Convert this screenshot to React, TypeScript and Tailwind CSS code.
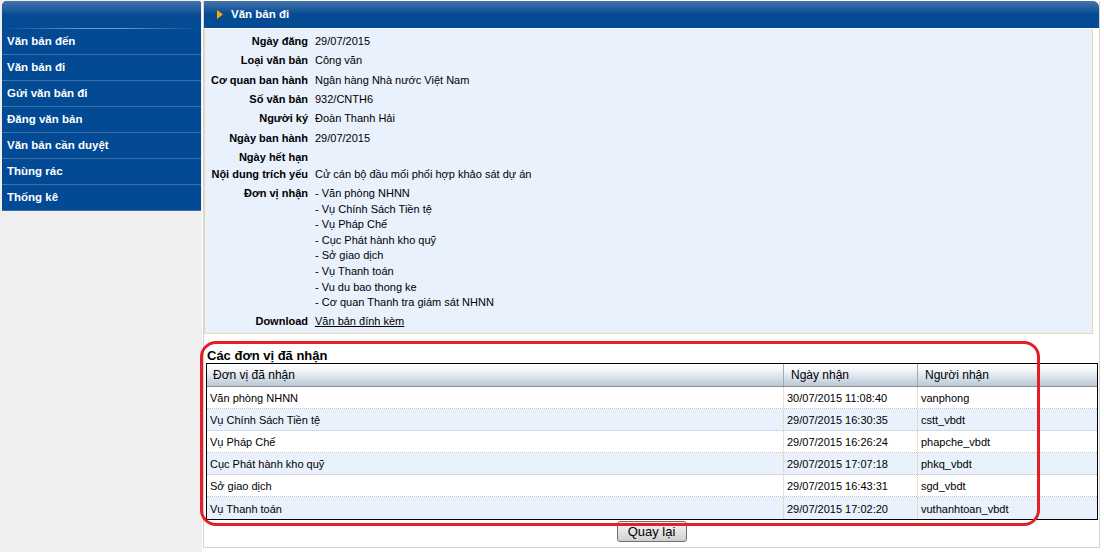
const menu = [
  'Văn bản đến',
  'Văn bản đi',
  'Gửi văn bản đi',
  'Đăng văn bản',
  'Văn bản cần duyệt',
  'Thùng rác',
  'Thống kê',
];

const fields = [
  { label: 'Ngày đăng', value: '29/07/2015', h: 'h-[20px]' },
  { label: 'Loại văn bản', value: 'Công văn', h: 'h-[19px]' },
  { label: 'Cơ quan ban hành', value: 'Ngân hàng Nhà nước Việt Nam', h: 'h-[20px]' },
  { label: 'Số văn bản', value: '932/CNTH6', h: 'h-[19px]' },
  { label: 'Người ký', value: 'Đoàn Thanh Hải', h: 'h-[19px]' },
  { label: 'Ngày ban hành', value: '29/07/2015', h: 'h-[20px]' },
  { label: 'Ngày hết hạn', value: '', h: 'h-[18px]' },
  { label: 'Nội dung trích yếu', value: 'Cử cán bộ đầu mối phối hợp khảo sát dự án', h: 'h-[17px]' },
];

const units = [
  'Văn phòng NHNN',
  'Vụ Chính Sách Tiền tệ',
  'Vụ Pháp Chế',
  'Cục Phát hành kho quỹ',
  'Sở giao dịch',
  'Vụ Thanh toán',
  'Vu du bao thong ke',
  'Cơ quan Thanh tra giám sát NHNN',
];

const received = [
  ['Văn phòng NHNN', '30/07/2015 11:08:40', 'vanphong'],
  ['Vụ Chính Sách Tiền tệ', '29/07/2015 16:30:35', 'cstt_vbdt'],
  ['Vụ Pháp Chế', '29/07/2015 16:26:24', 'phapche_vbdt'],
  ['Cục Phát hành kho quỹ', '29/07/2015 17:07:18', 'phkq_vbdt'],
  ['Sở giao dịch', '29/07/2015 16:43:31', 'sgd_vbdt'],
  ['Vụ Thanh toán', '29/07/2015 17:02:20', 'vuthanhtoan_vbdt'],
];

export default function App() {
  return (
    <div className="relative flex h-[552px] w-[1104px] overflow-hidden bg-white font-['Liberation_Sans',Arial,sans-serif] text-[11px] text-black">
      {/* left menu */}
      <aside className="w-[202px] shrink-0 bg-[#efefef] pl-[2px] pt-[1px]">
        <div className="w-[199px] rounded-tl-[5px] rounded-tr-[3px] bg-[#024a93]">
          <div className="h-[27px] rounded-tl-[5px] rounded-tr-[3px] bg-[linear-gradient(to_bottom,#4572ac,#044b93_55%)]" />
          <div className="h-[1px] bg-[linear-gradient(to_right,#024a93,#6f98c8_40%,#6f98c8_60%,#024a93)]" />
          {menu.map((m) => (
            <div
              key={m}
              className="flex h-[26px] items-center border-b border-[#3a6fab] pl-[5px] pt-[1px] text-[11.5px] font-bold text-white"
            >
              {m}
            </div>
          ))}
        </div>
      </aside>

      {/* main panel */}
      <main className="ml-[1px] mt-[1px] flex h-[547px] w-[897px] flex-col border-x border-b border-[#d2d2d2]">
        <div className="flex h-[27px] items-center rounded-tr-[6px] bg-[linear-gradient(to_bottom,#4572ac,#044b93_50%)] pl-[13px]">
          <svg width="6" height="9" viewBox="0 0 6 9" className="mr-[8px]">
            <polygon points="0,0 6,4.5 0,9" fill="#f6ab00" />
          </svg>
          <span className="text-[11.5px] font-bold text-white">Văn bản đi</span>
        </div>

        <section className="mt-[1px] w-[889px] border-x border-b border-[#e4dcae] bg-[#e8f1fc] pb-[1px] pt-[2px]">
          {fields.map((f) => (
            <div key={f.label} className={`flex items-center ${f.h}`}>
              <div className="flex w-[103px] justify-end whitespace-nowrap font-bold">{f.label}</div>
              <div className="pl-[7px]">{f.value}</div>
            </div>
          ))}
          <div className="flex pt-[3px]">
            <div className="flex w-[103px] justify-end whitespace-nowrap font-bold leading-[15.6px]">Đơn vị nhận</div>
            <div className="pl-[7px] leading-[15.6px]">
              {units.map((u) => (
                <div key={u}>- {u}</div>
              ))}
            </div>
          </div>
          <div className="flex h-[21px] items-center">
            <div className="flex w-[103px] justify-end font-bold">Download</div>
            <div className="pl-[7px]">
              <a href="#" className="text-black underline">Văn bản đính kèm</a>
            </div>
          </div>
        </section>

        <div className="ml-[3px] mt-[15px] h-[14px] text-[13px] font-bold leading-[14px]">Các đơn vị đã nhận</div>

        <div className="ml-[2px] w-[892px] border border-black">
          <div className="grid h-[23px] grid-cols-[577px_134px_1fr] border-b border-[#8c8c8c] bg-[linear-gradient(to_bottom,#ffffff,#f2f5f8_30%,#bac8d6)] text-[12px]">
            <div className="flex items-center border-r border-[#a8a8a8] pl-[6px] pt-[1px]">Đơn vị đã nhận</div>
            <div className="flex items-center border-r border-[#a8a8a8] pl-[7px] pt-[1px]">Ngày nhận</div>
            <div className="flex items-center pl-[7px] pt-[1px]">Người nhận</div>
          </div>
          {received.map((r, i) => (
            <div
              key={r[0]}
              className={`grid h-[22px] grid-cols-[577px_134px_1fr] ${i < received.length - 1 ? 'border-b border-dotted border-[#c4c4c4]' : ''} ${i % 2 === 1 ? 'bg-[#e8f1fc]' : 'bg-white'}`}
            >
              <div className="flex items-center border-r border-dotted border-[#d6c6a4] pl-[3px] pt-[2px]">{r[0]}</div>
              <div className="flex items-center border-r border-dotted border-[#d6c6a4] pl-[3px] pt-[2px]">{r[1]}</div>
              <div className="flex items-center pl-[3px] pt-[2px]">{r[2]}</div>
            </div>
          ))}
        </div>

        <div className="mt-[1px] flex justify-center">
          <button className="h-[21px] w-[70px] rounded-[3px] border border-[#707070] bg-[linear-gradient(to_bottom,#f4f4f4,#e4e4e4_50%,#cfcfcf)] text-[13px] leading-[19px] text-black">
            Quay lại
          </button>
        </div>
      </main>

      {/* red highlight annotation */}
      <div className="pointer-events-none absolute left-[200px] top-[341px] h-[185px] w-[840px] rounded-[16px] border-[3px] border-[#e51d25]" />
    </div>
  );
}
